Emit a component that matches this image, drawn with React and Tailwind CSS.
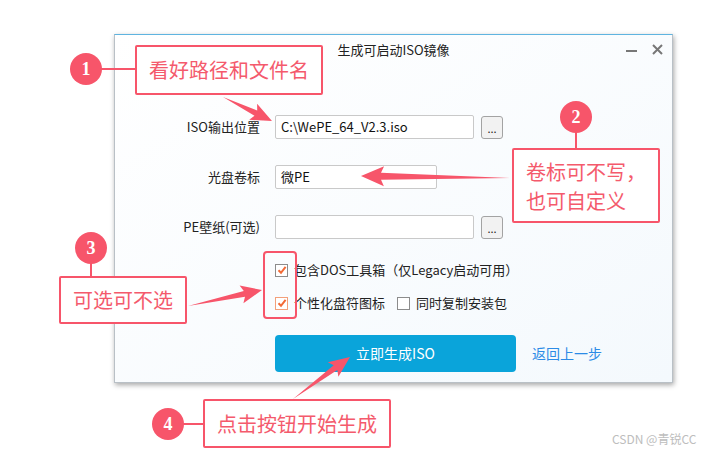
import React from 'react';

const RED = '#f7556a';

const arrowPts = (x1, y1, x2, y2, hl = 16, hw = 9, sw = 3) => {
  const dx = x2 - x1, dy = y2 - y1;
  const len = Math.hypot(dx, dy);
  const ux = dx / len, uy = dy / len;
  const nx = -uy, ny = ux;
  const bx = x2 - ux * hl, by = y2 - uy * hl;
  const bbx = bx - ux * 3, bby = by - uy * 3;
  return [
    [x1, y1],
    [bx + nx * sw, by + ny * sw],
    [bbx + nx * hw, bby + ny * hw],
    [x2, y2],
    [bbx - nx * hw, bby - ny * hw],
    [bx - nx * sw, by - ny * sw],
  ].map(p => p.map(v => v.toFixed(1)).join(',')).join(' ');
};

const arrows = [
  [223, 97, 272, 121, 18, 9, 3],
  [510, 178, 361, 176, 20, 10, 3.5],
  [188, 306, 262, 290, 18, 9, 3],
  [293, 399, 350, 357, 18, 9, 3],
];

const circles = [
  { cx: 86, cy: 69, n: '1' },
  { cx: 576, cy: 117, n: '2' },
  { cx: 91, cy: 248, n: '3' },
  { cx: 168, cy: 424, n: '4' },
];

function CheckBox({ checked, focus }) {
  return (
    <div className={`w-[13px] h-[13px] border bg-white flex items-center justify-center ${focus ? 'border-[#f3a07a]' : 'border-[#8c8c8c]'}`}>
      {checked && (
        <svg width="10" height="10" viewBox="0 0 10 10">
          <path d="M1.5 5.2 L4 7.8 L8.6 1.8" fill="none" stroke="#f26a36" strokeWidth="2" />
        </svg>
      )}
    </div>
  );
}

function Field({ label, value, width, browse }) {
  return (
    <div className="flex items-center h-[24px]">
      <div className="w-[145px] text-right text-[13px] text-[#222]">{label}</div>
      <div className="ml-[15px] h-[24px] border border-[#c9c9c9] bg-white rounded-[2px] flex items-center pl-[5px] text-[13px] text-[#111]" style={{ width }}>
        {value}
      </div>
      {browse && (
        <div className="ml-[7px] w-[22px] h-[23px] border border-[#a3a3a3] rounded-[3px] bg-[#f2f2f2] flex items-end justify-center pb-[4px] text-[11px] leading-none text-[#222]">...</div>
      )}
    </div>
  );
}

export default function App() {
  return (
    <div className="relative w-[713px] h-[453px] bg-white overflow-hidden font-['Noto_Sans_CJK_SC','Noto_Sans',sans-serif]">
      {/* dialog window */}
      <div className="ml-[114px] mt-[34px] w-[559px] h-[349px] border border-[#b9c0c6] border-t-[#5fb4e0] bg-gradient-to-br from-[#ffffff] to-[#f4f9fd] shadow-[1px_2px_5px_rgba(0,0,0,0.35)] flex flex-col">
        <div className="relative h-[29px] flex items-center justify-center text-[13px] text-[#222]">
          生成可启动ISO镜像
          <div className="absolute right-[9px] top-[9px] flex items-center gap-[15px]">
            <svg width="11" height="11" viewBox="0 0 11 11">
              <rect x="0" y="6" width="11" height="2" fill="#777" />
            </svg>
            <svg width="11" height="11" viewBox="0 0 11 11">
              <path d="M1 1 L10 10 M10 1 L1 10" stroke="#777" strokeWidth="2" />
            </svg>
          </div>
        </div>

        <div className="mt-[51px] flex flex-col gap-[26px]">
          <Field label="ISO输出位置" value="C:\WePE_64_V2.3.iso" width={199} browse />
          <Field label="光盘卷标" value="微PE" width={162} />
          <Field label="PE壁纸(可选)" value="" width={199} browse />
        </div>

        <div className="mt-[22px] ml-[160px] flex flex-col gap-[15px] text-[13px] text-[#222]">
          <div className="flex items-center h-[18px]">
            <CheckBox checked />
            <span className="ml-[6px]">包含DOS工具箱（仅Legacy启动可用）</span>
          </div>
          <div className="flex items-center h-[18px]">
            <CheckBox checked focus />
            <span className="ml-[6px]">个性化盘符图标</span>
            <div className="ml-[12px]"><CheckBox /></div>
            <span className="ml-[6px]">同时复制安装包</span>
          </div>
        </div>

        <div className="mt-[23px] ml-[160px] flex items-center">
          <div className="w-[241px] h-[37px] rounded-[4px] bg-[#0aa4da] text-white text-[14px] flex items-center justify-center">立即生成ISO</div>
          <span className="ml-[16px] text-[14px] text-[#2c8be6]">返回上一步</span>
        </div>
      </div>

      {/* annotation overlay */}
      <svg className="absolute inset-0" width="713" height="453">
        <line x1="100" y1="69" x2="136" y2="69" stroke={RED} strokeWidth="2" />
        <line x1="576" y1="131" x2="576" y2="149" stroke={RED} strokeWidth="2" />
        <line x1="91" y1="262" x2="91" y2="277" stroke={RED} strokeWidth="2" />
        <line x1="182" y1="424" x2="204" y2="424" stroke={RED} strokeWidth="2" />
        {arrows.map((a, i) => (
          <polygon key={i} points={arrowPts(...a)} fill={RED} />
        ))}
        {circles.map(c => (
          <g key={c.n}>
            <circle cx={c.cx} cy={c.cy} r="16" fill={RED} />
            <text x={c.cx} y={c.cy + 6} textAnchor="middle" fill="white" fontSize="18" fontWeight="bold" fontFamily="Liberation Serif, serif">{c.n}</text>
          </g>
        ))}
      </svg>

      <div className="absolute left-[135px] top-[45px] w-[188px] h-[50px] border-2 border-[#f7556a] rounded-[2px] bg-white flex items-center justify-center text-[20px] text-[#f45a6c]">看好路径和文件名</div>
      <div className="absolute left-[512px] top-[148px] w-[148px] h-[75px] border-2 border-[#f7556a] rounded-[2px] bg-white flex items-center pl-[12px] text-[20px] leading-[29px] text-[#f45a6c]">
        <p>卷标可不写，<br />也可自定义</p>
      </div>
      <div className="absolute left-[59px] top-[276px] w-[128px] h-[48px] border-2 border-[#f7556a] rounded-[2px] bg-white flex items-center justify-center text-[20px] text-[#f45a6c]">可选可不选</div>
      <div className="absolute left-[203px] top-[399px] w-[188px] h-[49px] border-2 border-[#f7556a] rounded-[2px] bg-white flex items-center justify-center text-[20px] text-[#f45a6c]">点击按钮开始生成</div>
      <div className="absolute left-[263px] top-[251px] w-[34px] h-[68px] border-2 border-[#f7556a] rounded-[4px]" />

      <div className="absolute left-[612px] top-[430px] text-[12px] text-[#bdbdbd]">CSDN @青锐CC</div>
    </div>
  );
}
